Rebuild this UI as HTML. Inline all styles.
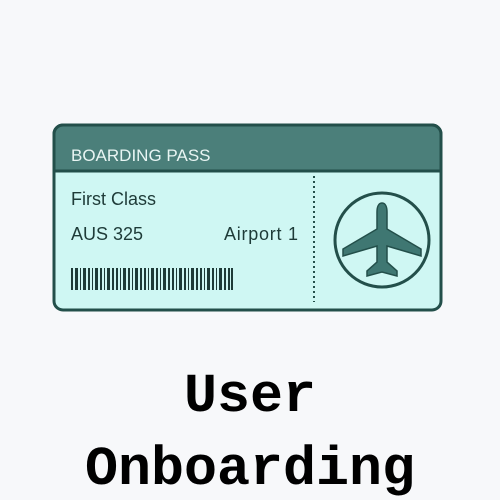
<!DOCTYPE html><html><head><style>
html,body{margin:0;padding:0;background:#f7f8fa;width:500px;height:500px;overflow:hidden}
</style></head><body>
<svg width="500" height="500" viewBox="0 0 500 500" xmlns="http://www.w3.org/2000/svg">
<rect width="500" height="500" fill="#f7f8fa"/>
<rect x="54" y="125" width="387" height="185" rx="9" fill="#cff7f3" stroke="#234f4a" stroke-width="3"/>
<path d="M54 171 V134 a9 9 0 0 1 9 -9 H432 a9 9 0 0 1 9 9 V171 Z" fill="#4b7f7a" stroke="#234f4a" stroke-width="3"/>
<text x="71" y="161" font-family="Liberation Sans, sans-serif" font-size="17" fill="#e8f5f3">BOARDING PASS</text>
<text x="71" y="205" font-family="Liberation Sans, sans-serif" font-size="18" fill="#1e3b38">First Class</text>
<text x="71" y="240" font-family="Liberation Sans, sans-serif" font-size="18" fill="#1e3b38">AUS 325</text>
<text x="298" y="240" text-anchor="end" font-family="Liberation Sans, sans-serif" font-size="18" textLength="74" fill="#1e3b38">Airport 1</text>
<line x1="314" y1="176" x2="314" y2="302" stroke="#234f4a" stroke-width="2" stroke-dasharray="2 3"/>
<circle cx="382" cy="240" r="47" fill="none" stroke="#234f4a" stroke-width="3"/>
<path d="M382 203 c-4 0 -5 5 -5 9 v17 l-34 20 v7 l34 -10 v16 l-10 9 v5 l15 -4 l15 4 v-5 l-10 -9 v-16 l34 10 v-7 l-34 -20 v-17 c0 -4 -1 -9 -5 -9z" fill="#3f7772" stroke="#234f4a" stroke-width="1.5"/>
<g fill="#1e3b38">
<rect x="71" y="268" width="2" height="22"/><rect x="75" y="268" width="3" height="22"/><rect x="80" y="268" width="1" height="22"/><rect x="83" y="268" width="3" height="22"/><rect x="88" y="268" width="2" height="22"/><rect x="92" y="268" width="1" height="22"/><rect x="95" y="268" width="3" height="22"/><rect x="100" y="268" width="2" height="22"/><rect x="104" y="268" width="1" height="22"/><rect x="107" y="268" width="3" height="22"/><rect x="112" y="268" width="2" height="22"/><rect x="116" y="268" width="2" height="22"/><rect x="120" y="268" width="1" height="22"/><rect x="123" y="268" width="3" height="22"/><rect x="128" y="268" width="2" height="22"/><rect x="132" y="268" width="1" height="22"/><rect x="135" y="268" width="3" height="22"/><rect x="140" y="268" width="2" height="22"/><rect x="144" y="268" width="2" height="22"/><rect x="148" y="268" width="1" height="22"/><rect x="151" y="268" width="3" height="22"/><rect x="156" y="268" width="2" height="22"/><rect x="160" y="268" width="1" height="22"/><rect x="163" y="268" width="3" height="22"/><rect x="168" y="268" width="2" height="22"/><rect x="172" y="268" width="2" height="22"/><rect x="176" y="268" width="1" height="22"/><rect x="179" y="268" width="3" height="22"/><rect x="184" y="268" width="2" height="22"/><rect x="188" y="268" width="1" height="22"/><rect x="191" y="268" width="3" height="22"/><rect x="196" y="268" width="2" height="22"/><rect x="200" y="268" width="2" height="22"/><rect x="204" y="268" width="1" height="22"/><rect x="207" y="268" width="3" height="22"/><rect x="212" y="268" width="2" height="22"/><rect x="216" y="268" width="1" height="22"/><rect x="219" y="268" width="3" height="22"/><rect x="224" y="268" width="2" height="22"/><rect x="228" y="268" width="2" height="22"/><rect x="231" y="268" width="2" height="22"/>
</g>
<text x="250" y="411" text-anchor="middle" font-family="Liberation Mono, monospace" font-weight="bold" font-size="55" fill="#000">User</text>
<text x="250" y="484" text-anchor="middle" font-family="Liberation Mono, monospace" font-weight="bold" font-size="55" fill="#000">Onboarding</text>
</svg>
</body></html>
